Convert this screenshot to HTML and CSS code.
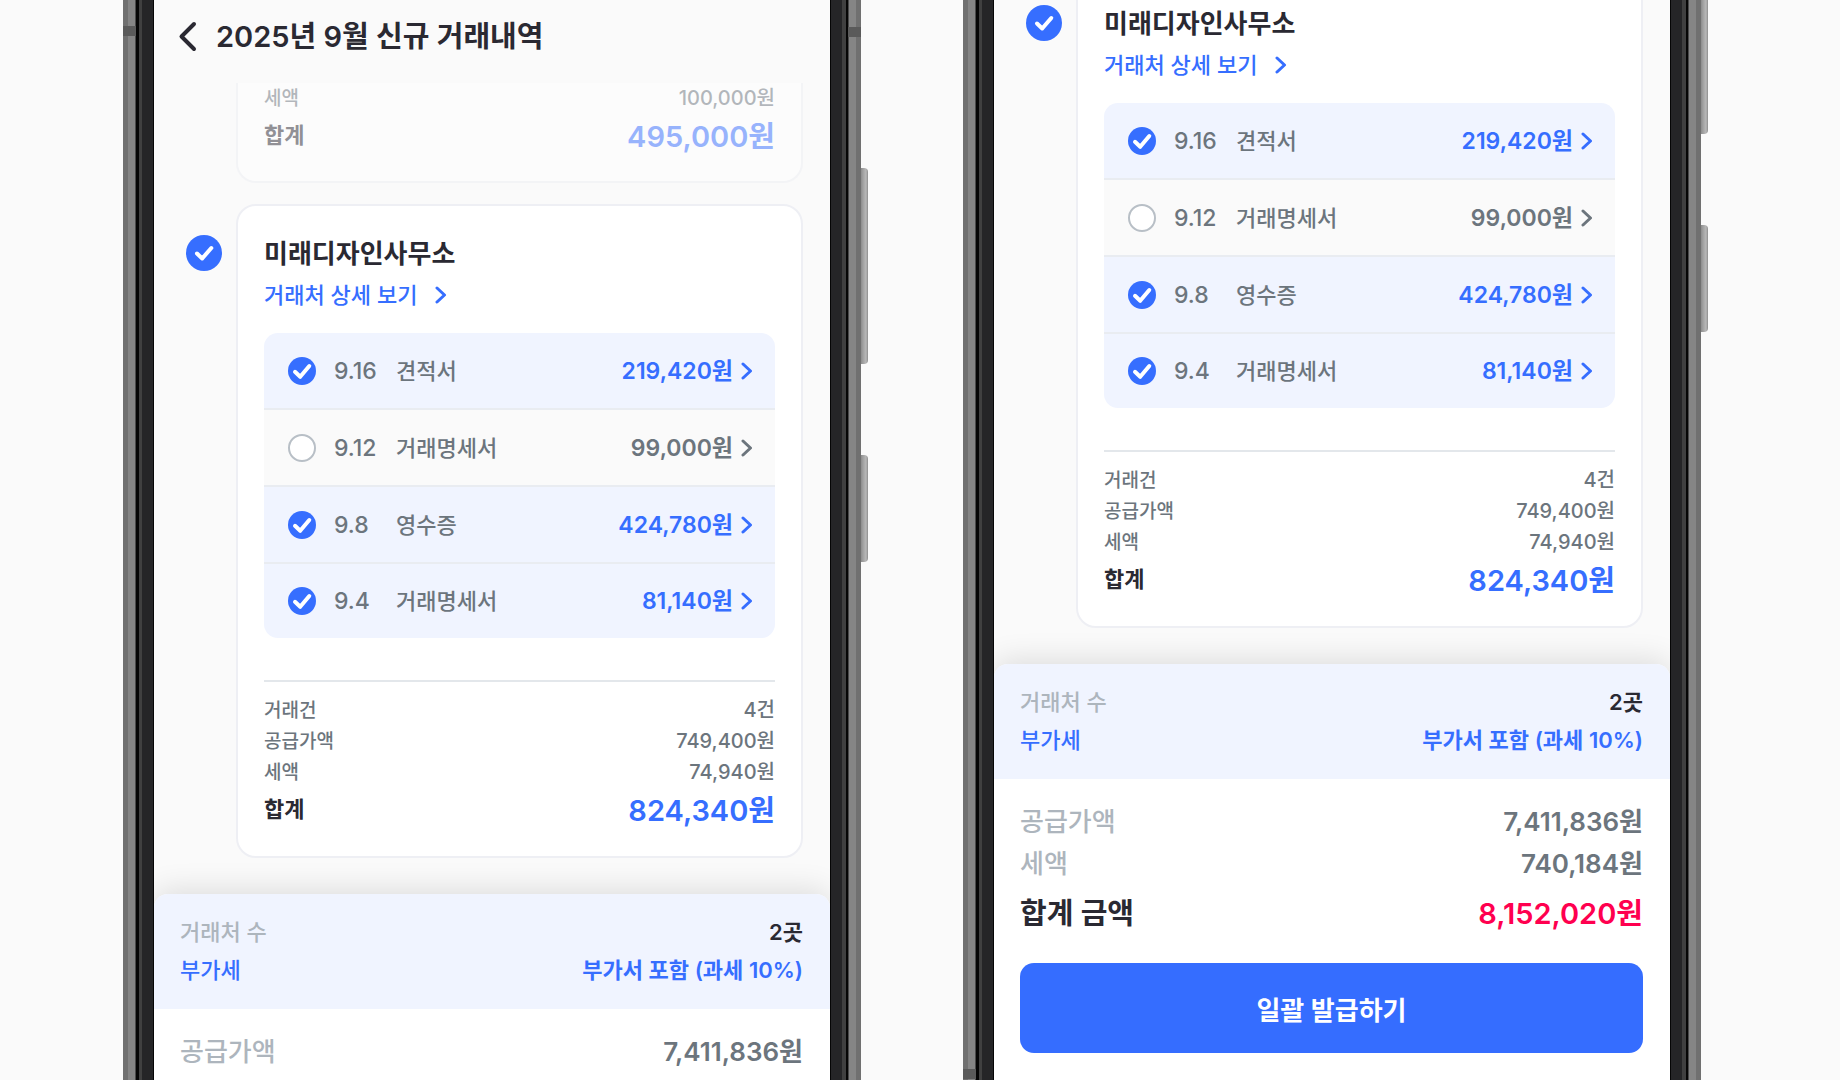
FILE: index.html
```
<!DOCTYPE html>

<html lang="ko">
    <head>
        <meta charset="utf-8">
        <title>2025년 9월 신규 거래내역</title>
        <meta name="viewport" content="width=device-width, initial-scale=1">
        <link rel="stylesheet" href="styles.css">
    </head>

    <body>
        <svg class="symbols" aria-hidden="true">
            <symbol id="check_large" viewBox="0 0 36 36"><path d="M11 18.5l5.2 5L25.3 13"/></symbol>
            <symbol id="check_small" viewBox="0 0 28 28"><path d="M7 14.8l5.2 5L21.3 9"/></symbol>
            <symbol id="arrow" viewBox="0 0 12 18"><path d="M2 2l7.5 7L2 16"/></symbol>
        </svg>

        <main class="stage">
            <!-- 왼쪽: 스크롤 중인 화면 -->
            <div class="phone">
                <div class="frame frame-left"><div class="antenna"></div></div>
                <div class="screen">
                    <header class="topbar">
                        <button class="back" aria-label="뒤로">
                            <svg width="20" height="32" viewBox="0 0 20 32"><path d="M16 3L3.5 15.5L16 28"/></svg>
                        </button>
                        <h1>2025년 9월 신규 거래내역</h1>
                    </header>

                    <div class="list">
                        <article class="card card-faded">
                            <dl class="totals">
                                <div><dt>세액</dt><dd>100,000원</dd></div>
                                <div class="sum"><dt>합계</dt><dd>495,000원</dd></div>
                            </dl>
                        </article>

                        <section class="client">
                            <label class="check check-large">
                                <input type="checkbox" aria-label="미래디자인사무소 선택" checked>
                                <svg><use href="#check_large"/></svg>
                            </label>
                            <article class="card">
                                <h2>미래디자인사무소</h2>
                                <a class="detail" href="#detail">거래처 상세 보기 <svg class="arrow"><use href="#arrow"/></svg></a>
                                <ul class="docs">
                                    <li class="selected">
                                        <label class="check"><input type="checkbox" aria-label="9.16 견적서" checked><svg><use href="#check_small"/></svg></label>
                                        <span class="date">9.16</span>
                                        <span class="kind">견적서</span>
                                        <a href="#doc">219,420원 <svg class="arrow"><use href="#arrow"/></svg></a>
                                    </li>
                                    <li>
                                        <label class="check"><input type="checkbox" aria-label="9.12 거래명세서"><svg><use href="#check_small"/></svg></label>
                                        <span class="date">9.12</span>
                                        <span class="kind">거래명세서</span>
                                        <a href="#doc">99,000원 <svg class="arrow"><use href="#arrow"/></svg></a>
                                    </li>
                                    <li class="selected">
                                        <label class="check"><input type="checkbox" aria-label="9.8 영수증" checked><svg><use href="#check_small"/></svg></label>
                                        <span class="date">9.8</span>
                                        <span class="kind">영수증</span>
                                        <a href="#doc">424,780원 <svg class="arrow"><use href="#arrow"/></svg></a>
                                    </li>
                                    <li class="selected">
                                        <label class="check"><input type="checkbox" aria-label="9.4 거래명세서" checked><svg><use href="#check_small"/></svg></label>
                                        <span class="date">9.4</span>
                                        <span class="kind">거래명세서</span>
                                        <a href="#doc">81,140원 <svg class="arrow"><use href="#arrow"/></svg></a>
                                    </li>
                                </ul>
                                <dl class="totals totals-line">
                                    <div><dt>거래건</dt><dd>4건</dd></div>
                                    <div><dt>공급가액</dt><dd>749,400원</dd></div>
                                    <div><dt>세액</dt><dd>74,940원</dd></div>
                                    <div class="sum"><dt>합계</dt><dd>824,340원</dd></div>
                                </dl>
                            </article>
                        </section>
                    </div>

                    <footer class="sheet">
                        <dl class="sheet-head">
                            <div><dt>거래처 수</dt><dd>2곳</dd></div>
                            <div class="tax"><dt>부가세</dt><dd>부가서 포함 (과세 10%)</dd></div>
                        </dl>
                        <dl class="sheet-body">
                            <div><dt>공급가액</dt><dd>7,411,836원</dd></div>
                        </dl>
                    </footer>
                </div>
                <div class="frame frame-right"><div class="antenna"></div></div>
                <div class="keys"><div class="volume"></div><div class="power"></div></div>
            </div>

            <!-- 오른쪽: 맨 아래까지 내린 화면 -->
            <div class="phone phone-bottom">
                <div class="frame frame-left"><div class="antenna"></div></div>
                <div class="screen">
                    <div class="list">
                        <section class="client">
                            <label class="check check-large">
                                <input type="checkbox" aria-label="미래디자인사무소 선택" checked>
                                <svg><use href="#check_large"/></svg>
                            </label>
                            <article class="card">
                                <h2>미래디자인사무소</h2>
                                <a class="detail" href="#detail">거래처 상세 보기 <svg class="arrow"><use href="#arrow"/></svg></a>
                                <ul class="docs">
                                    <li class="selected">
                                        <label class="check"><input type="checkbox" aria-label="9.16 견적서" checked><svg><use href="#check_small"/></svg></label>
                                        <span class="date">9.16</span>
                                        <span class="kind">견적서</span>
                                        <a href="#doc">219,420원 <svg class="arrow"><use href="#arrow"/></svg></a>
                                    </li>
                                    <li>
                                        <label class="check"><input type="checkbox" aria-label="9.12 거래명세서"><svg><use href="#check_small"/></svg></label>
                                        <span class="date">9.12</span>
                                        <span class="kind">거래명세서</span>
                                        <a href="#doc">99,000원 <svg class="arrow"><use href="#arrow"/></svg></a>
                                    </li>
                                    <li class="selected">
                                        <label class="check"><input type="checkbox" aria-label="9.8 영수증" checked><svg><use href="#check_small"/></svg></label>
                                        <span class="date">9.8</span>
                                        <span class="kind">영수증</span>
                                        <a href="#doc">424,780원 <svg class="arrow"><use href="#arrow"/></svg></a>
                                    </li>
                                    <li class="selected">
                                        <label class="check"><input type="checkbox" aria-label="9.4 거래명세서" checked><svg><use href="#check_small"/></svg></label>
                                        <span class="date">9.4</span>
                                        <span class="kind">거래명세서</span>
                                        <a href="#doc">81,140원 <svg class="arrow"><use href="#arrow"/></svg></a>
                                    </li>
                                </ul>
                                <dl class="totals totals-line">
                                    <div><dt>거래건</dt><dd>4건</dd></div>
                                    <div><dt>공급가액</dt><dd>749,400원</dd></div>
                                    <div><dt>세액</dt><dd>74,940원</dd></div>
                                    <div class="sum"><dt>합계</dt><dd>824,340원</dd></div>
                                </dl>
                            </article>
                        </section>
                    </div>

                    <footer class="sheet">
                        <dl class="sheet-head">
                            <div><dt>거래처 수</dt><dd>2곳</dd></div>
                            <div class="tax"><dt>부가세</dt><dd>부가서 포함 (과세 10%)</dd></div>
                        </dl>
                        <dl class="sheet-body">
                            <div><dt>공급가액</dt><dd>7,411,836원</dd></div>
                            <div><dt>세액</dt><dd>740,184원</dd></div>
                            <div class="grand"><dt>합계 금액</dt><dd>8,152,020원</dd></div>
                        </dl>
                        <button class="issue">일괄 발급하기</button>
                    </footer>
                </div>
                <div class="frame frame-right"></div>
                <div class="keys"><div class="volume"></div><div class="power"></div></div>
            </div>
        </main>
    </body>
</html>
```

FILE: styles.css
```
* {
    box-sizing: border-box;
}

body {
    font-family: Inter, "Noto Sans CJK KR", sans-serif;
    font-weight: 500;
    background-color: #fafafa;
    color: #2a2932;
    margin: 0;
}

h1, h2, ul, dl, dd {
    margin: 0;
    padding: 0;
}

a {
    color: #366eff;
    text-decoration: none;
}

button {
    border: none;
    font-family: inherit;
    cursor: pointer;
}

svg {
    fill: none;
    stroke: currentColor;
    stroke-linecap: round;
    stroke-linejoin: round;
}

.symbols {
    display: none;
}

.stage {
    display: flex;
    gap: 95px;
    height: 100vh;
    padding: 0 132px 0 123px;
    overflow: hidden;
}

/* 기기 */
.phone {
    flex: 1;
    display: flex;
    min-width: 0;
}

.frame {
    flex: none;
    width: 31px;
    background: linear-gradient(to right, #707070 5px, #858585 5px 12px, #4a4a4a 12px 13px, #060606 13px 16px, #404040 16px 19px, #252527 19px 30px, #050505 30px);
}

.frame-right {
    background: linear-gradient(to left, #707070 5px, #858585 5px 12px, #4a4a4a 12px 13px, #060606 13px 15px, #404040 15px 19px, #252527 19px 30px, #050505 30px);
}

.antenna {
    width: 13px;
    height: 10px;
    margin-top: 26px;
    background-color: #5a5a5a;
}

.frame-right .antenna {
    margin-top: 27px;
    margin-left: auto;
}

.phone-bottom .antenna {
    margin-top: 1069px;
}

.keys {
    flex: none;
    width: 7px;
    padding-top: 168px;
}

.volume, .power {
    height: 196px;
    border-radius: 0 4px 4px 0;
    background: linear-gradient(to right, #8c8c8c, #a0a0a0 2px, #b8b8b8 5px, #8c8c8c);
}

.power {
    height: 107px;
    margin-top: 91px;
}

.phone-bottom .keys {
    padding-top: 0;
}

.phone-bottom .volume {
    height: 134px;
    border-radius: 0 0 4px 0;
}

.screen {
    flex: 1;
    min-width: 0;
    display: flex;
    flex-direction: column;
}

.topbar {
    flex: none;
    display: flex;
    align-items: center;
    gap: 18px;
    height: 83px;
    padding: 0 24px 10px;
}

.back {
    display: flex;
    padding: 0;
    background: none;
    color: #2a2932;
    stroke-width: 4;
}

h1 {
    font-size: 29px;
    line-height: 40px;
    font-weight: 600;
}

/* 거래처 목록 */
.list {
    padding: 0 27px 0 32px;
}

.client {
    display: flex;
    gap: 14px;
}

.card {
    flex: 1;
    min-width: 0;
    padding: 26px 26px 22px;
    border: 2px solid #eeeff4;
    border-radius: 20px;
    background-color: #fff;
}

.card-faded {
    margin: 0 0 21px 50px;
    padding: 0 26px 21px;
    border-top: none;
    border-radius: 0 0 20px 20px;
    opacity: 0.5;
}

.phone-bottom .client {
    margin-top: -26px;
}

.check {
    flex: none;
    display: grid;
    width: 28px;
    height: 28px;
    color: #fff;
}

.check input, .check svg {
    grid-area: 1 / 1;
    width: 100%;
    height: 100%;
    margin: 0;
}

.check input {
    appearance: none;
    border: 2px solid #b8bfc6;
    border-radius: 50%;
    background-color: #fff;
    cursor: pointer;
}

.check input:checked {
    border: none;
    background-color: #366eff;
}

.check input:not(:checked) + svg {
    display: none;
}

.check svg {
    stroke-width: 4;
    pointer-events: none;
}

.check-large {
    width: 36px;
    height: 36px;
    margin-top: 31px;
}

h2 {
    font-size: 26px;
    line-height: 44px;
    font-weight: 600;
}

.arrow {
    width: 12px;
    height: 18px;
    stroke-width: 3;
}

.detail {
    display: flex;
    align-items: center;
    gap: 18px;
    font-size: 22px;
    line-height: 38px;
}

.docs {
    margin-top: 19px;
    border-radius: 14px;
    overflow: hidden;
    list-style: none;
}

.docs li {
    display: flex;
    align-items: center;
    height: 77px;
    padding: 0 22px 0 24px;
    border-bottom: 2px solid #e9ecf1;
    background-color: #fafafa;
    color: #6c757d;
    font-size: 22px;
    line-height: 32px;
}

.docs li.selected {
    background-color: #f0f4ff;
}

.docs li:last-child {
    height: 74px;
    border-bottom: none;
}

.docs a {
    display: flex;
    align-items: center;
    gap: 8px;
    margin-left: auto;
    color: #6c757d;
    font-size: 23px;
    font-weight: 600;
}

.docs .selected a {
    color: #366eff;
}

.date {
    width: 62px;
    margin-left: 18px;
    font-size: 23px;
}

/* 금액 */
dl > div {
    display: flex;
    justify-content: space-between;
}

.totals {
    color: #6c757d;
    font-size: 19px;
    line-height: 31px;
}

.totals dd {
    font-size: 20px;
}

.totals-line {
    margin-top: 42px;
    padding-top: 13px;
    border-top: 2px solid #e3e7eb;
}

.totals .sum {
    color: #2a2932;
    font-size: 22px;
    line-height: 43px;
    font-weight: 600;
}

.totals .sum dd {
    color: #366eff;
    font-size: 29px;
    line-height: 46px;
}

.sheet {
    margin-top: 36px;
    flex: 1 0 auto;
    border-radius: 14px 14px 0 0;
    background-color: #fff;
    box-shadow: 0 -4px 30px rgba(0, 0, 0, 0.12);
    clip-path: inset(-40px 0 0 0);
}

.sheet-head {
    padding: 19px 27px 20px 26px;
    border-radius: 14px 14px 0 0;
    background-color: #f0f4ff;
    font-size: 22px;
    line-height: 38px;
}

.sheet dt {
    color: #adb5bd;
}

.sheet .tax dt, .tax dd {
    color: #366eff;
}

.sheet-body {
    padding: 22px 27px 0 26px;
    color: #6c757d;
    font-size: 26px;
    line-height: 42px;
}

.sheet dd {
    font-weight: 600;
}

.sheet .grand {
    margin-top: 3px;
    font-size: 29px;
    line-height: 52px;
    font-weight: 600;
}

.sheet .grand dt {
    color: #2a2932;
}

.grand dd {
    color: #ff004f;
}

.issue {
    display: block;
    width: calc(100% - 53px);
    height: 90px;
    margin: 23px 27px 27px 26px;
    border-radius: 14px;
    background-color: #356dff;
    color: #fff;
    font-size: 26px;
    font-weight: 600;
}
```
